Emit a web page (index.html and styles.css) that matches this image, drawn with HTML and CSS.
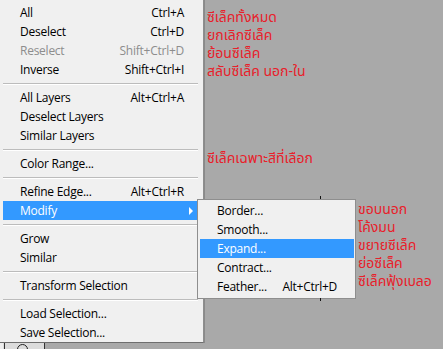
FILE: index.html
```html
<!DOCTYPE html>
<html>
<head>
<meta charset="utf-8">
<link rel="stylesheet" href="styles.css">
</head>
<body>
<div class="screen">
  <div class="left">
    <div class="menu">
      <div class="item"><span class="label">All</span><span class="key">Ctrl+A</span></div>
      <div class="item"><span class="label">Deselect</span><span class="key">Ctrl+D</span></div>
      <div class="item disabled"><span class="label">Reselect</span><span class="key">Shift+Ctrl+D</span></div>
      <div class="item"><span class="label">Inverse</span><span class="key">Shift+Ctrl+I</span></div>
      <div class="sep"></div>
      <div class="item"><span class="label">All Layers</span><span class="key">Alt+Ctrl+A</span></div>
      <div class="item"><span class="label">Deselect Layers</span></div>
      <div class="item"><span class="label">Similar Layers</span></div>
      <div class="sep"></div>
      <div class="item"><span class="label">Color Range...</span></div>
      <div class="sep"></div>
      <div class="item"><span class="label">Refine Edge...</span><span class="key">Alt+Ctrl+R</span></div>
      <div class="item active sub-parent"><span class="label">Modify</span><span class="arrow"></span>
        <div class="popup">
          <span class="tick tick-top"></span>
          <span class="tick tick-bottom"></span>
          <div class="submenu">
            <div class="sitem"><span class="label">Border...</span></div>
            <div class="sitem"><span class="label">Smooth...</span></div>
            <div class="sitem active"><span class="label">Expand...</span></div>
            <div class="sitem"><span class="label">Contract...</span></div>
            <div class="sitem"><span class="label">Feather...</span><span class="key">Alt+Ctrl+D</span></div>
          </div>
          <div class="note note-sub">
            <div>ขอบนอก</div>
            <div>โค้งมน</div>
            <div>ขยายซีเล็ค</div>
            <div>ย่อซีเล็ค</div>
            <div>ซีเล็คฟุ้งเบลอ</div>
          </div>
        </div>
      </div>
      <div class="sep"></div>
      <div class="item"><span class="label">Grow</span></div>
      <div class="item"><span class="label">Similar</span></div>
      <div class="sep"></div>
      <div class="item"><span class="label">Transform Selection</span></div>
      <div class="sep"></div>
      <div class="item"><span class="label">Load Selection...</span></div>
      <div class="item"><span class="label">Save Selection...</span></div>
    </div>
    <div class="toolstrip">
      <div class="toolbox"><span class="tool-circle"></span></div>
    </div>
  </div>
  <div class="notes">
    <div class="note note-top">
      <div>ซีเล็คทั้งหมด</div>
      <div>ยกเลิกซีเล็ค</div>
      <div>ย้อนซีเล็ค</div>
      <div>สลับซีเล็ค นอก-ใน</div>
    </div>
    <div class="note note-range">
      <div>ซีเล็คเฉพาะสีที่เลือก</div>
    </div>
  </div>
</div>
</body>
</html>
```
FILE: styles.css
```css
* { box-sizing: border-box; }
html, body { margin: 0; padding: 0; }
body {
  width: 443px;
  height: 349px;
  overflow: hidden;
  background: #a9a9a9;
  font-family: "Open Sans", "Noto Sans", sans-serif;
}
.screen {
  display: flex;
  align-items: flex-start;
}
.left {
  display: flex;
  flex-direction: column;
  width: 205px;
}
.menu {
  position: relative;
  width: 204px;
  background: #f0f0f0;
  border-right: 1px solid #8e8e8e;
  border-bottom: 1px solid #6e6e6e;
  box-shadow: 1px 0 0 #8a8a8a;
  padding-top: 3px;
  font-size: 12px;
  letter-spacing: -0.25px;
  color: #000;
}
.item {
  position: relative;
  height: 19px;
  margin: 0 6px 0 3px;
  padding: 0 13px 0 17px;
  display: flex;
  align-items: center;
  justify-content: space-between;
  white-space: nowrap;
}
.item.disabled { color: #8d8d8d; }
.item.active { background: #3399ff; color: #fff; }
.arrow {
  position: absolute;
  right: 4px;
  top: 6px;
  width: 0;
  height: 0;
  border-top: 4px solid transparent;
  border-bottom: 4px solid transparent;
  border-left: 4px solid #fff;
}
.sep {
  height: 9px;
  margin: 0 5px 0 3px;
  display: flex;
  align-items: center;
}
.sep::before {
  content: "";
  display: block;
  width: 100%;
  border-top: 1px solid #bcbcbc;
  border-bottom: 1px solid #ffffff;
}
.popup {
  position: absolute;
  left: 194px;
  top: -2px;
  display: flex;
  align-items: flex-start;
  color: #000;
  letter-spacing: -0.25px;
}
.submenu {
  width: 159px;
  background: #f0f0f0;
  border: 1px solid #8e8e8e;
  padding: 1px 1px 2px 2px;
}
.sitem {
  height: 19px;
  padding: 0 17px 0 17px;
  display: flex;
  align-items: center;
  justify-content: space-between;
  white-space: nowrap;
}
.sitem.active { background: #3399ff; color: #fff; }
.tick {
  position: absolute;
  left: 123px;
  width: 1px;
  height: 3px;
  background: #111;
}
.tick-top { top: -3px; }
.tick-bottom { top: 99px; }
.note {
  font-family: "Noto Sans Thai", Tahoma, "DejaVu Sans", sans-serif;
  color: #e8202a;
  font-size: 14px;
  line-height: 18px;
  letter-spacing: 0;
  white-space: nowrap;
}
.note-sub {
  margin-left: 2px;
  padding-top: 2px;
}
.notes {
  padding-left: 2px;
  padding-top: 9px;
}
.note-range { margin-top: 69px; }
.toolstrip {
  height: 7px;
  display: flex;
}
.toolbox {
  position: relative;
  width: 45px;
  height: 7px;
  background: #dcdcdc;
  border-left: 3px solid #efefef;
  border-right: 1px solid #333;
  overflow: hidden;
}
.toolbox::before {
  content: "";
  position: absolute;
  left: 1px;
  top: 0;
  width: 1px;
  height: 7px;
  background: #333;
}
.tool-circle {
  position: absolute;
  left: 14px;
  top: 1px;
  width: 11px;
  height: 11px;
  border: 1px solid #222;
  border-radius: 50%;
}
```
